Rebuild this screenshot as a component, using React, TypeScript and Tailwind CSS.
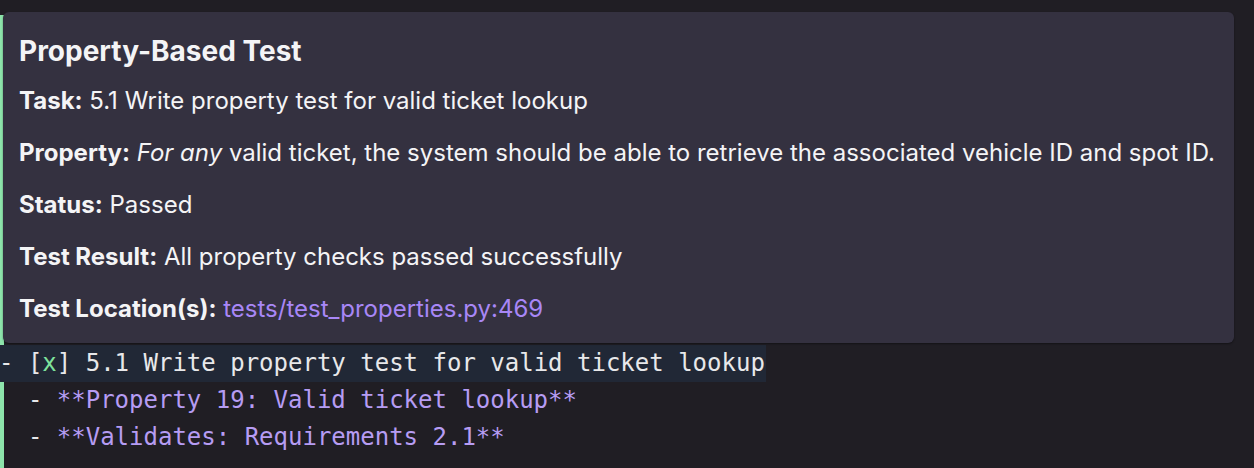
import React from "react";

const mono = { fontFamily: '"DejaVu Sans Mono", "Liberation Mono", monospace' };

export default function App() {
  return (
    <div className="relative w-[1254px] h-[468px] overflow-hidden bg-[#201e24]">
      {/* editor */}
      <div className="pt-[15px] text-[24px] leading-[37px] text-[#e8e8ea]" style={mono}>
        <div className="h-[330px] shadow-[inset_4px_0_0_#8de4ab]" />
        <div className="flex h-[37px] shadow-[inset_4px_0_0_#6db08d]">
          <div className="w-[766px] h-[37px] bg-[#212836]">
            <span className="block -ml-[1px] whitespace-pre">
              {"- ["}
              <span className="text-[#7ee29c]">x</span>
              {"] 5.1 Write property test for valid ticket lookup"}
            </span>
          </div>
        </div>
        <div className="h-[37px] shadow-[inset_4px_0_0_#8de4ab]">
          <span className="block -ml-[1px] whitespace-pre">
            {"  - "}
            <span className="text-[#b69cf3]">**Property 19: Valid ticket lookup**</span>
          </span>
        </div>
        <div className="h-[54px] shadow-[inset_4px_0_0_#8de4ab]">
          <span className="block -ml-[1px] whitespace-pre">
            {"  - "}
            <span className="text-[#b69cf3]">**Validates: Requirements 2.1**</span>
          </span>
        </div>
      </div>

      {/* hover tooltip */}
      <div
        className="absolute left-[3px] top-[12px] w-[1231px] h-[331px] rounded-[6px] bg-[#343140] pl-[16px] pt-[22px] text-[#f4f4f6] shadow-[0_1px_2px_rgba(0,0,0,0.4)]"
        style={{ fontFamily: 'Inter, "Noto Sans", sans-serif' }}
      >
        <div className="text-[28px] leading-[34px] font-bold">Property-Based Test</div>
        <div className="mt-[18px] flex flex-col gap-[22px] text-[24px] leading-[30px]">
          <p>
            <span className="font-bold">Task:</span> 5.1 Write property test for valid ticket lookup
          </p>
          <p>
            <span className="font-bold">Property:</span> <em>For any</em> valid ticket, the system should be able to
            retrieve the associated vehicle ID and spot ID.
          </p>
          <p>
            <span className="font-bold">Status:</span> Passed
          </p>
          <p>
            <span className="font-bold">Test Result:</span> All property checks passed successfully
          </p>
          <p>
            <span className="font-bold">Test Location(s):</span>{" "}
            <span className="text-[#a887f6]">tests/test_properties.py:469</span>
          </p>
        </div>
      </div>
    </div>
  );
}
